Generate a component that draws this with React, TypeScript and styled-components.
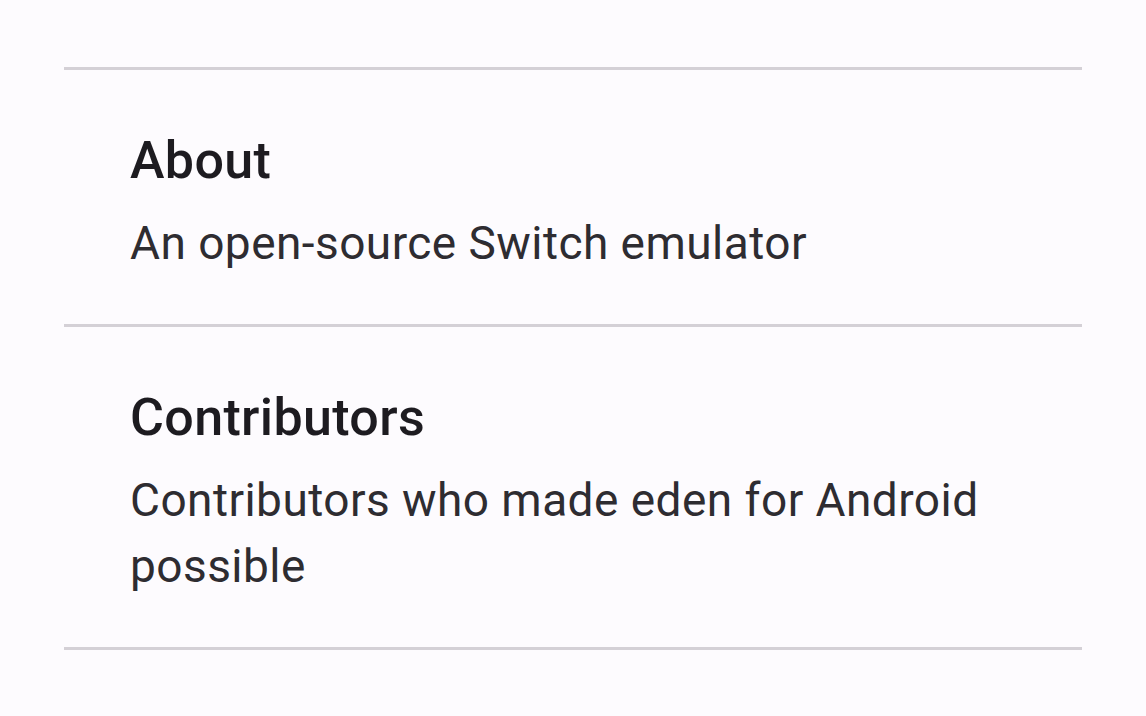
import styled, { createGlobalStyle } from "styled-components";

const GlobalStyle = createGlobalStyle`
  html, body {
    margin: 0;
    padding: 0;
    background: #fdfbfe;
  }
  body {
    font-family: Roboto, "Noto Sans", sans-serif;
    -webkit-font-smoothing: antialiased;
  }
`;

const Page = styled.div`
  width: 1146px;
  height: 716px;
  box-sizing: border-box;
  padding: 67px 64px 0;
  background: #fdfbfe;
  overflow: hidden;
`;

const List = styled.div`
  display: flex;
  flex-direction: column;
  border-top: 3px solid #d4d0d6;
`;

const Item = styled.div`
  display: flex;
  flex-direction: column;
  gap: 10px;
  padding: 51px 66px 48px 66px;
  border-bottom: 3px solid #d4d0d6;
`;

const Title = styled.div`
  font-size: 52px;
  line-height: 79px;
  font-weight: 500;
  letter-spacing: 0.35px;
  color: #1d1b20;
`;

const Summary = styled.div`
  font-size: 46px;
  line-height: 66px;
  font-weight: 400;
  letter-spacing: 0.45px;
  color: #2e2c31;
`;

const items = [
  { key: "about", title: "About", summary: "An open-source Switch emulator" },
  {
    key: "contributors",
    title: "Contributors",
    summary: "Contributors who made eden for Android possible",
  },
];

export default function App() {
  return (
    <>
      <GlobalStyle />
      <Page>
        <List>
          {items.map((item) => (
            <Item key={item.key}>
              <Title>{item.title}</Title>
              <Summary>{item.summary}</Summary>
            </Item>
          ))}
        </List>
      </Page>
    </>
  );
}
